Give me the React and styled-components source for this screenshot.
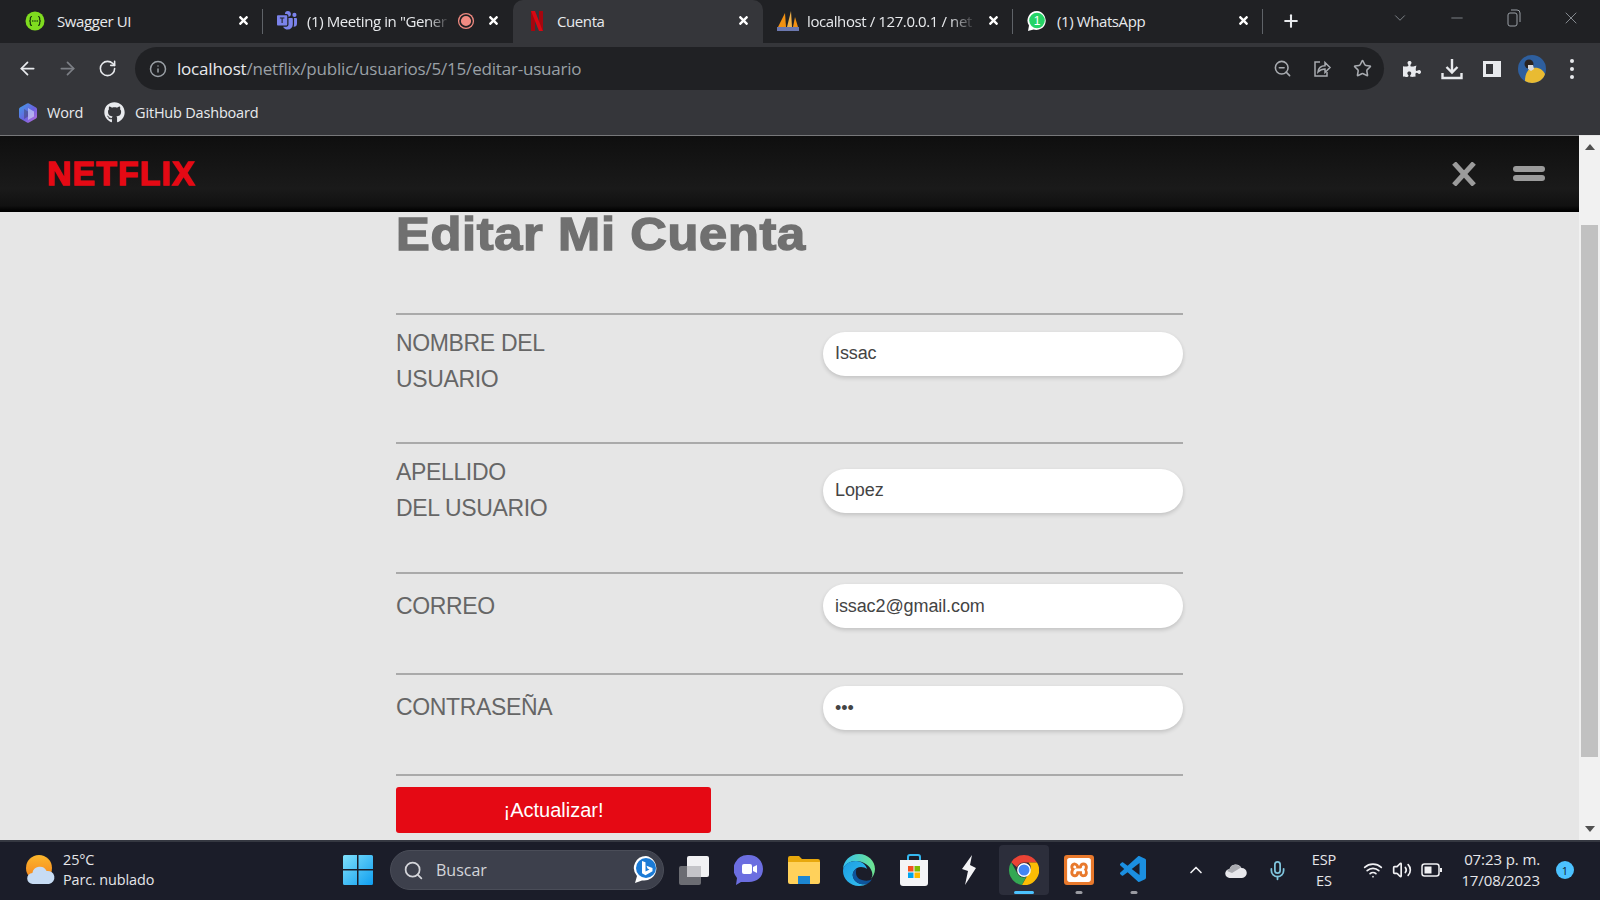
import React from "react";
import styled, { createGlobalStyle } from "styled-components";
import {
  ArrowLeft, ArrowRight, RotateCw, Info, ZoomOut, Star, Search, X, Plus,
  ChevronDown, Minus, ChevronUp, Mic, Wifi, Volume2,
} from "lucide-react";
import { FaGithub, FaPuzzlePiece, FaTimes } from "react-icons/fa";
import { SiXampp } from "react-icons/si";
import { BsMicrosoftTeams } from "react-icons/bs";
import { VscVscode } from "react-icons/vsc";

const Global = createGlobalStyle`
  html, body { margin: 0; padding: 0; height: 100%; overflow: hidden; background: #e6e6e6; }
  * { box-sizing: border-box; }
`;

const UI = `"Open Sans", "Noto Sans", sans-serif`;
const WEB = `"Liberation Sans", Arial, sans-serif`;

const Screen = styled.div`
  width: 1600px; height: 900px; display: flex; flex-direction: column; overflow: hidden;
`;

/* ---- browser chrome ---- */
const TabStrip = styled.div`
  height: 43px; background: #202124; display: flex; align-items: stretch; padding-left: 13px; flex: none;
`;
const Tab = styled.div`
  width: 250px; display: flex; align-items: center; padding: 0 10px 2px 14px; position: relative;
  color: #e8eaed; font: 15px ${UI}; letter-spacing: -0.4px;
  background: ${p => (p.$active ? "#35363a" : "transparent")};
  border-radius: ${p => (p.$active ? "10px 10px 0 0" : "0")};
  &::after {
    content: ""; position: absolute; right: 0; top: 9px; bottom: 9px; width: 1px;
    background: ${p => (p.$sep ? "#5f6368" : "transparent")};
  }
`;
const Favicon = styled.span`
  width: 30px; height: 22px; display: flex; align-items: center; justify-content: flex-start; flex: none;
`;
const TabTitle = styled.span`
  white-space: nowrap; margin-right: auto;
  ${p => p.$fade && `
    -webkit-mask-image: linear-gradient(90deg, #000 86%, rgba(0,0,0,.15) 100%);
    mask-image: linear-gradient(90deg, #000 86%, rgba(0,0,0,.15) 100%);
  `}
`;
const RecDot = styled.span`
  width: 16px; height: 16px; border-radius: 50%; background: #f28b82; border: 2px solid #202124;
  box-shadow: 0 0 0 1.5px #f28b82; margin-right: 9px; flex: none; transform: scale(.85);
`;
const TabClose = styled.span`
  width: 20px; display: flex; justify-content: center; color: #fff; flex: none;
`;
const NewTab = styled.span`
  width: 56px; display: flex; align-items: center; justify-content: center; color: #e8eaed; padding-bottom: 2px;
`;
const WindowButtons = styled.div`
  margin-left: auto; display: flex; align-items: flex-start; color: #9aa0a6; padding-right: 1px;
`;
const WinBtn = styled.span`
  width: 57px; height: 36px; display: flex; align-items: center; justify-content: center;
`;

const Toolbar = styled.div`
  height: 47px; background: #35363a; display: flex; align-items: flex-end; flex: none; padding-left: 7px;
`;
const NavBtn = styled.span`
  width: 40px; height: 43px; display: flex; align-items: center; justify-content: center;
  color: ${p => (p.$dim ? "#7c7f85" : "#e8eaed")};
`;
const Omnibox = styled.div`
  width: 1249px; height: 43px; margin-left: 8px; background: #202124; border-radius: 22px;
  display: flex; align-items: center; padding: 0 2px 0 14px; color: #9aa0a6;
`;
const Url = styled.div`
  flex: 1; margin-left: 10px; font: 17px ${UI}; letter-spacing: -0.2px; color: #9aa0a6; white-space: nowrap;
  b { font-weight: 400; color: #e8eaed; }
`;
const OmniIcon = styled.span`
  width: 40px; display: flex; justify-content: center; color: #a8abb0;
`;
const ToolIcon = styled.span`
  width: 40px; height: 43px; display: flex; align-items: center; justify-content: center; color: #e8eaed;
`;
const ToolGroup = styled.div`
  display: flex; margin-left: 8px;
`;
const Dots = styled.span`
  display: flex; flex-direction: column; gap: 4px;
  i { display: block; width: 4px; height: 4px; border-radius: 50%; background: #e8eaed; }
`;

const Bookmarks = styled.div`
  height: 45px; background: #35363a; display: flex; align-items: center; padding-left: 18px; flex: none;
  color: #e8eaed; font: 14.5px ${UI}; letter-spacing: -0.2px;
`;
const Bookmark = styled.div`
  display: flex; align-items: center; gap: ${p => p.$gap}px; margin-right: 21px;
`;

/* ---- page ---- */
const Viewport = styled.div`
  flex: 1; min-height: 0; display: flex; background: #e6e6e6;
`;
const PageColumn = styled.div`
  flex: 1; min-width: 0; display: flex; flex-direction: column; overflow: hidden;
`;
const Header = styled.header`
  height: 77px; flex: none; border-top: 1px solid #77787a; border-bottom: 1px solid #000;
  background: linear-gradient(180deg, #0f0f0f 0%, #1a1a1a 70%, #111 93%, #000 100%);
  display: flex; align-items: center; padding: 0 34px 0 47px;
`;
const Logo = styled.div`
  color: #e50914; font: 900 33.5px/1 ${WEB}; letter-spacing: 1.3px; -webkit-text-stroke: 1.4px #e50914;
  margin-top: 1px;
`;
const HeaderActions = styled.div`
  margin-left: auto; display: flex; align-items: center; gap: 37px; color: #9b9b9b;
`;
const Burger = styled.span`
  width: 32px; display: flex; flex-direction: column; gap: 3px;
  i { display: block; height: 6px; border-radius: 3px; background: #9b9b9b; }
`;

const Main = styled.main`
  flex: 1; min-height: 0; width: 787px; margin-left: 396px;
`;
const Title = styled.h1`
  margin: 0; height: 101px; color: #707070; font: 700 46px/44px ${WEB}; white-space: nowrap;
  letter-spacing: 0.6px; -webkit-text-stroke: 1.4px #707070; transform: scaleX(1.1); transform-origin: left top;
`;
const Row = styled.div`
  height: ${p => p.$h}px; border-top: 2px solid #aaaaaa; display: grid; grid-template-columns: 1fr 360px;
`;
const Label = styled.label`
  color: #666; font: 23px/35.6px ${WEB}; letter-spacing: -0.35px; padding-top: ${p => p.$top}px;
  max-width: 190px; display: block;
`;
const Field = styled.div`
  padding-top: ${p => p.$top}px;
`;
const Input = styled.input`
  width: 100%; height: 44px; border: 0; outline: 0; border-radius: 22px; background: #fff;
  padding: 0 12px ${p => p.$lift}px; color: #444; font: 18px ${WEB}; letter-spacing: -0.1px;
  box-shadow: 0 2px 4px rgba(0, 0, 0, .16);
`;
const LastRule = styled.div`
  border-top: 2px solid #aaaaaa; padding-top: 11px;
`;
const Submit = styled.button`
  width: 315px; height: 46px; border: 0; border-radius: 3px; background: #e50914; color: #fff;
  font: 20px ${WEB}; display: block;
`;

const Scrollbar = styled.div`
  width: 21px; flex: none; background: #f1f1f1; display: flex; flex-direction: column; margin-top: 1px; padding: 0 2px;
`;
const ScrollArrow = styled.div`
  height: 22px; display: flex; align-items: center; justify-content: center; flex: none;
  &::before {
    content: ""; width: 0; height: 0; border-left: 5px solid transparent; border-right: 5px solid transparent;
    ${p => (p.$down ? "border-top: 6px solid #505050;" : "border-bottom: 6px solid #505050;")}
  }
`;
const ScrollTrack = styled.div`
  flex: 1; padding: ${p => p.$top}px 0 ${p => p.$bottom}px; display: flex;
`;
const ScrollThumb = styled.div`
  flex: 1; background: #c1c1c1;
`;

/* ---- taskbar ---- */
const Taskbar = styled.footer`
  height: 60px; flex: none; background: #1b1d29; border-top: 2px solid #353841; display: flex; align-items: center;
  color: #e6e6ea; font: 14.4px ${UI}; padding: 0 0 2px 26px;
`;
const Weather = styled.div`
  width: 317px; display: flex; align-items: center; gap: 7px;
`;
const TwoLines = styled.div`
  display: flex; flex-direction: column; line-height: 20px; text-align: left;
  letter-spacing: -0.1px; white-space: nowrap;
`;
const SearchPill = styled.div`
  width: 274px; height: 40px; margin-left: 17px; border-radius: 20px; background: #3d404c; border: 1px solid #4a4d58;
  display: flex; align-items: center; padding: 0 4px 0 12px; gap: 12px; color: #d4d5da; font-size: 16px;
`;
const PillText = styled.span`
  flex: 1;
`;
const Apps = styled.div`
  display: flex; align-items: center; margin-left: 3px;
`;
const AppSlot = styled.div`
  width: 54.9px; height: 50px; display: flex; align-items: center; justify-content: center; position: relative; flex: none;
  &::before {
    content: ""; position: absolute; inset: 0 2.5px; border-radius: 4px;
    background: ${p => (p.$active ? "#2c2e3b" : "transparent")};
  }
  & > * { position: relative; }
  &::after {
    content: ""; position: absolute; bottom: 1px; left: 50%; transform: translateX(-50%); height: 3px; border-radius: 2px;
    width: ${p => (p.$active ? "20px" : p.$running ? "7px" : "0")};
    background: ${p => (p.$active ? "#4cc2ff" : "#9a9ba2")};
  }
`;
const Tray = styled.div`
  display: flex; align-items: center; margin-left: 17px; font-size: 14.5px;
`;
const TrayIcon = styled.span`
  width: ${p => p.$w}px; display: flex; justify-content: center; color: ${p => p.$color || "#f0f0f3"};
`;
const Lang = styled(TwoLines)`
  width: 48px; margin: 0 10px 0 4px; text-align: center; line-height: 21px;
`;
const Clock = styled(TwoLines)`
  width: 90px; margin-left: 2px; line-height: 21px; font-size: 15px; align-items: flex-end;
`;
const Badge = styled.span`
  width: 18px; height: 18px; margin-left: 16px; border-radius: 50%; background: #4cc2ff; color: #10202c; font-size: 11px;
  display: flex; align-items: center; justify-content: center;
`;

/* ---- drawings ---- */
const SwaggerIcon = () => (
  <svg width="20" height="20" viewBox="0 0 20 20" style={{ marginLeft: -2 }}>
    <circle cx="10" cy="10" r="9.500" fill="#7fdc1f" />
    <path fill="none" stroke="#17330c" strokeWidth="1.200" d="M7 5.500c-1.500 0-1.700.8-1.700 2v1.200c0 .8-.4 1.300-1.100 1.300.7 0 1.100.5 1.100 1.300v1.200c0 1.200.2 2 1.700 2M13 5.500c1.500 0 1.700.8 1.700 2v1.200c0 .8.400 1.300 1.100 1.300-.7 0-1.100.5-1.100 1.300v1.200c0 1.200-.2 2-1.700 2" />
    <circle cx="7.800" cy="10" r=".8" fill="#17330c" /><circle cx="10" cy="10" r=".8" fill="#17330c" /><circle cx="12.200" cy="10" r=".8" fill="#17330c" />
  </svg>
);
const NetflixN = () => (
  <svg width="20" height="20" viewBox="0 0 20 20"><path fill="#a5060e" d="M4 0h4v20l-4 .5z" /><path fill="#a5060e" d="M12 0h4v20.500L12 20z" /><path fill="#d90812" d="M4 0h4l8 20.500-4-.5z" /></svg>
);
const Pma = () => (
  <svg width="22" height="22" viewBox="0 0 22 22"><path fill="#f29111" d="M1 17 8 3l1 14z" /><path fill="#f2b34a" d="M10 17 14 1l1 16z" /><path fill="#f29111" d="M16 17l2-10 3 10z" /><path fill="#6c78af" d="M0 17h22v4H0z" /></svg>
);
const Whats = () => (
  <svg width="20" height="22" viewBox="0 0 20 22">
    <path fill="#fff" d="M10 1a9.500 9.500 0 0 0-8 14.600L1 21l5.600-1.400A9.500 9.500 0 1 0 10 1z" />
    <circle cx="10" cy="10.500" r="7.800" fill="#25d366" />
    <text x="10" y="15" fontSize="12" textAnchor="middle" fill="#fff" fontFamily="Liberation Sans">1</text>
  </svg>
);
const Copilot = () => (
  <svg width="20" height="22" viewBox="0 0 20 22">
    <defs>
      <linearGradient id="cp" x1="0" y1="0" x2="1" y2="1"><stop offset="0" stopColor="#3fa0e8" /><stop offset=".55" stopColor="#6a62e0" /><stop offset="1" stopColor="#c56fd8" /></linearGradient>
    </defs>
    <path fill="url(#cp)" d="M9 1.500a2 2 0 0 1 2 0l7 4a2 2 0 0 1 1 1.700v7.600a2 2 0 0 1-1 1.700l-7 4a2 2 0 0 1-2 0l-7-4a2 2 0 0 1-1-1.700V7.200a2 2 0 0 1 1-1.700z" />
    <path fill="#35363a" d="M6 7l4 2.500v5L6 17z" opacity=".35" />
    <path fill="#dfe9fb" d="M10 6l6 3.500v5L10 18z" opacity=".55" />
  </svg>
);
const Share = () => (
  <svg width="20" height="20" viewBox="0 0 20 20" fill="none" stroke="currentColor" strokeWidth="1.500"><path d="M8 3H3v14h12v-4" /><path d="M6 13c.5-4 3-6.200 7-6.200V3.500l5 5-5 5V10c-3 0-5 1-7 3z" /></svg>
);
const DownloadIcon = () => (
  <svg width="22" height="22" viewBox="0 0 22 22" fill="none" stroke="currentColor" strokeWidth="2.400"><path d="M11 1v13M5.500 9l5.500 5.500L16.500 9" /><path d="M1.500 15v5h19v-5" /></svg>
);
const SidePanel = () => (
  <svg width="18" height="18" viewBox="0 0 18 18"><path fill="currentColor" fillRule="evenodd" d="M0 1h18v16H0zM3 4v10h7V4z" /></svg>
);
const Avatar = () => (
  <svg width="28" height="28" viewBox="0 0 28 28">
    <circle cx="14" cy="14" r="14" fill="#2e5f9e" />
    <path fill="#e9bb32" d="M7 26c0-7 3-13 8-13 6-1 10 2 12 6-1 5-7 9-13 9-2 0-5-.7-7-2z" />
    <circle cx="11" cy="9" r="4.500" fill="#2a2320" />
    <path fill="#dcdcdc" d="M10 10h5l1 4-3 2-3-2z" />
  </svg>
);
const HeaderX = () => (
  <svg width="24" height="24" viewBox="0 0 24 24" stroke="currentColor" strokeWidth="5" strokeLinecap="butt"><path d="M2 1l20 22M22 1L2 23" /></svg>
);
const WeatherIcon = () => (
  <svg width="30" height="30" viewBox="0 0 30 30">
    <defs><linearGradient id="sun" x1="0" y1="0" x2="0" y2="1"><stop offset="0" stopColor="#fcb72c" /><stop offset="1" stopColor="#f4801d" /></linearGradient></defs>
    <circle cx="13" cy="13" r="13" fill="url(#sun)" />
    <path fill="#c7dcf4" d="M7 29a5.500 5.500 0 0 1-.6-11A7.500 7.500 0 0 1 20.600 16 6.500 6.500 0 0 1 23 29z" />
  </svg>
);
const WinLogo = () => (
  <svg width="30" height="30" viewBox="0 0 30 30">
    <defs><linearGradient id="win" x1="0" y1="0" x2="1" y2="1"><stop offset="0" stopColor="#7fe0fb" /><stop offset="1" stopColor="#0f9ef0" /></linearGradient></defs>
    <path fill="url(#win)" d="M0 1.500A1.500 1.500 0 0 1 1.500 0H14v14H0zM15.500 0H28.500A1.500 1.500 0 0 1 30 1.500V14H15.500zM0 15.500H14V30H1.500A1.500 1.500 0 0 1 0 28.500zM15.500 15.500H30V28.500A1.500 1.500 0 0 1 28.500 30H15.500z" />
  </svg>
);
const Bing = () => (
  <svg width="26" height="30" viewBox="0 0 26 30">
    <path fill="#fff" d="M13 1a12 12 0 0 0-9 20l-2 7 7-2.600A12 12 0 1 0 13 1z" />
    <circle cx="13" cy="13" r="10" fill="#1b7bd6" />
    <path fill="#fff" d="M9 6l3.500 1.200v9.400l4-2.200-2-1-1-2.700 6 2.200v3.400l-7 4L9 18.300z" />
  </svg>
);
const TaskView = () => (
  <svg width="30" height="30" viewBox="0 0 30 30">
    <rect x="0" y="11" width="22" height="19" rx="2" fill="#6b6c72" />
    <rect x="8" y="1" width="22" height="21" rx="2" fill="#f1f1f3" />
    <rect x="8" y="11" width="14" height="11" fill="#c4c4c8" />
  </svg>
);
const ChatIcon = () => (
  <svg width="30" height="32" viewBox="0 0 30 32">
    <path fill="#6c6ee0" d="M15 1c8 0 14 6 14 14s-6 13-14 13H7l-5 3 1-7A14 14 0 0 1 15 1z" />
    <rect x="8" y="10" width="10" height="10" rx="2" fill="#fff" />
    <path fill="#fff" d="M19 13l4-2v8l-4-2z" />
  </svg>
);
const Folder = () => (
  <svg width="32" height="28" viewBox="0 0 32 28">
    <path fill="#e8a80c" d="M0 2a2 2 0 0 1 2-2h9l3 3h16a2 2 0 0 1 2 2v4H0z" />
    <path fill="#ffd15b" d="M0 6h32v20a2 2 0 0 1-2 2H2a2 2 0 0 1-2-2z" />
    <path fill="#1c86d1" d="M10 20h12v8H10z" />
  </svg>
);
const Edge = () => (
  <svg width="32" height="32" viewBox="0 0 32 32">
    <defs>
      <linearGradient id="eg1" x1="0" y1="1" x2="1" y2="0"><stop offset="0" stopColor="#0c59a4" /><stop offset="1" stopColor="#114a8b" /></linearGradient>
      <linearGradient id="eg2" x1="0" y1="0" x2="1" y2="1"><stop offset="0" stopColor="#1b9de2" /><stop offset="1" stopColor="#35c1f1" /></linearGradient>
      <linearGradient id="eg3" x1="0" y1="0" x2="1" y2="0"><stop offset="0" stopColor="#35c1f1" /><stop offset="1" stopColor="#6fe58f" /></linearGradient>
    </defs>
    <path fill="url(#eg3)" d="M16 0C7 0 .5 7 0 15c2-5 7-8 13-8 7 0 14 4 16 11 1 3 0 6-2 8 3-3 5-7 5-11C32 7 25 0 16 0z" />
    <path fill="url(#eg2)" d="M13 7C6 7 0 11 0 17c0 8 7 15 16 15 3 0 6-1 8-2-4 1-12 0-14-7-1-4 1-7 4-9 3-2 8-1 10 1-1-4-5-8-11-8z" />
    <path fill="url(#eg1)" d="M14 14c-3 2-5 5-4 9 2 7 10 8 14 7 2-1 4-3 5-5-2 2-7 2-10 1-4-1-6-4-6-7 0-2 0-4 1-5z" />
  </svg>
);
const Store = () => (
  <svg width="30" height="32" viewBox="0 0 30 32">
    <path fill="none" stroke="#35b8f0" strokeWidth="2" d="M9 7V3a2 2 0 0 1 2-2h8a2 2 0 0 1 2 2v4" />
    <path fill="#f4f4f6" d="M1 6h28v23a3 3 0 0 1-3 3H4a3 3 0 0 1-3-3z" />
    <rect x="9" y="12" width="5.500" height="5.500" fill="#f25022" />
    <rect x="15.500" y="12" width="5.500" height="5.500" fill="#7fba00" />
    <rect x="9" y="18.500" width="5.500" height="5.500" fill="#00a4ef" />
    <rect x="15.500" y="18.500" width="5.500" height="5.500" fill="#ffb900" />
  </svg>
);
const Bolt = () => (
  <svg width="16" height="30" viewBox="0 0 16 30">
    <path fill="#f4f4f6" d="M11 0 1 14l6 2-3 14 11-17-6-3z" />
  </svg>
);
const ChromeLogo = () => (
  <svg width="30" height="30" viewBox="0 0 30 30">
    <path fill="#ea4335" d="M15 0a15 15 0 0 1 13 7.500H15a7.500 7.500 0 0 0-7 4.800L2.200 7.300A15 15 0 0 1 15 0z" />
    <path fill="#34a853" d="M2.200 7.300 8.700 18.900a7.500 7.500 0 0 0 8.400 3.200L13 30A15 15 0 0 1 2.200 7.300z" />
    <path fill="#fbbc04" d="M28 7.500A15 15 0 0 1 13 30l6.500-11.400a7.500 7.500 0 0 0 0-11.100z" />
    <circle cx="15" cy="15" r="6.900" fill="#fff" />
    <circle cx="15" cy="15" r="5.500" fill="#4285f4" />
  </svg>
);
const XamppBox = styled.span`
  width: 30px; height: 30px; background: #e8792c; border-radius: 3px; color: #fff;
  display: flex; align-items: center; justify-content: center;
`;
const CloudIcon = () => (
  <svg width="22" height="16" viewBox="0 0 22 16"><path fill="#e8e8ec" d="M5 16a4.500 4.500 0 0 1-.5-9A6.500 6.500 0 0 1 16.500 6 5 5 0 0 1 17 16z" /><path fill="#a9aab0" d="M4.500 7A6.500 6.500 0 0 1 16 5.500L7 11 2 9z" /></svg>
);
const Battery = () => (
  <svg width="22" height="16" viewBox="0 0 22 16" fill="none"><rect x="1" y="2" width="17" height="12" rx="2.500" stroke="#f0f0f3" strokeWidth="1.500" /><rect x="3.500" y="4.500" width="7" height="7" fill="#f0f0f3" /><rect x="19" y="6" width="2" height="4" fill="#f0f0f3" /></svg>
);
const RestoreIcon = () => (
  <svg width="14" height="18" viewBox="0 0 14 18" fill="none" stroke="currentColor" strokeWidth="1"><rect x="1" y="4" width="9" height="13" rx="2" /><path d="M4 1h6a3 3 0 0 1 3 3v9" /></svg>
);

const tabs = [
  { icon: <SwaggerIcon />, title: "Swagger UI", sep: true },
  { icon: <BsMicrosoftTeams size={20} color="#7b83eb" />, title: '(1) Meeting in "Gener', fade: true, rec: true },
  { icon: <NetflixN />, title: "Cuenta", active: true },
  { icon: <Pma />, title: "localhost / 127.0.0.1 / net", fade: true, sep: true },
  { icon: <Whats />, title: "(1) WhatsApp", sep: true },
];

const rows = [
  { id: "nombre", label: "NOMBRE DEL USUARIO", value: "Issac", h: 129, lt: 11, ft: 17, lift: 2 },
  { id: "apellido", label: <>APELLIDO<br />DEL USUARIO</>, value: "Lopez", h: 130, lt: 11, ft: 25, lift: 2 },
  { id: "correo", label: "CORREO", value: "issac2@gmail.com", h: 101, lt: 15, ft: 10, lift: 0 },
  { id: "clave", label: "CONTRASEÑA", value: "abc", h: 101, lt: 15, ft: 11, lift: 0, type: "password" },
];

export default function App() {
  return (
    <Screen>
      <Global />
      <TabStrip>
        {tabs.map(t => (
          <Tab key={t.title} $active={t.active} $sep={t.sep}>
            <Favicon>{t.icon}</Favicon>
            <TabTitle $fade={t.fade}>{t.title}</TabTitle>
            {t.rec && <RecDot />}
            <TabClose><FaTimes size={13} /></TabClose>
          </Tab>
        ))}
        <NewTab><Plus size={20} strokeWidth={2.5} /></NewTab>
        <WindowButtons>
          <WinBtn><ChevronDown size={18} strokeWidth={1} /></WinBtn>
          <WinBtn><Minus size={18} strokeWidth={1} /></WinBtn>
          <WinBtn><RestoreIcon /></WinBtn>
          <WinBtn><X size={20} strokeWidth={1} /></WinBtn>
        </WindowButtons>
      </TabStrip>

      <Toolbar>
        <NavBtn><ArrowLeft size={21} /></NavBtn>
        <NavBtn $dim><ArrowRight size={21} /></NavBtn>
        <NavBtn><RotateCw size={19} /></NavBtn>
        <Omnibox>
          <Info size={18} />
          <Url><b>localhost</b>/netflix/public/usuarios/5/15/editar-usuario</Url>
          <OmniIcon><ZoomOut size={19} /></OmniIcon>
          <OmniIcon><Share /></OmniIcon>
          <OmniIcon><Star size={19} /></OmniIcon>
        </Omnibox>
        <ToolGroup>
          <ToolIcon><FaPuzzlePiece size={18} /></ToolIcon>
          <ToolIcon><DownloadIcon /></ToolIcon>
          <ToolIcon><SidePanel /></ToolIcon>
          <ToolIcon><Avatar /></ToolIcon>
          <ToolIcon><Dots><i /><i /><i /></Dots></ToolIcon>
        </ToolGroup>
      </Toolbar>

      <Bookmarks>
        <Bookmark $gap={9}><Copilot />Word</Bookmark>
        <Bookmark $gap={10}><FaGithub size={21} />GitHub Dashboard</Bookmark>
      </Bookmarks>

      <Viewport>
        <PageColumn>
          <Header>
            <Logo>NETFLIX</Logo>
            <HeaderActions>
              <HeaderX />
              <Burger><i /><i /></Burger>
            </HeaderActions>
          </Header>
          <Main>
            <Title>Editar Mi Cuenta</Title>
            {rows.map(r => (
              <Row key={r.id} $h={r.h}>
                <Label htmlFor={r.id} $top={r.lt}>{r.label}</Label>
                <Field $top={r.ft}>
                  <Input id={r.id} $lift={r.lift} type={r.type || "text"} defaultValue={r.value} />
                </Field>
              </Row>
            ))}
            <LastRule><Submit type="button">¡Actualizar!</Submit></LastRule>
          </Main>
        </PageColumn>
        <Scrollbar>
          <ScrollArrow />
          <ScrollTrack $top={67} $bottom={61}><ScrollThumb /></ScrollTrack>
          <ScrollArrow $down />
        </Scrollbar>
      </Viewport>

      <Taskbar>
        <Weather>
          <WeatherIcon />
          <TwoLines><span>25°C</span><span>Parc. nublado</span></TwoLines>
        </Weather>
        <WinLogo />
        <SearchPill>
          <Search size={21} />
          <PillText>Buscar</PillText>
          <Bing />
        </SearchPill>
        <Apps>
          <AppSlot><TaskView /></AppSlot>
          <AppSlot><ChatIcon /></AppSlot>
          <AppSlot><Folder /></AppSlot>
          <AppSlot><Edge /></AppSlot>
          <AppSlot><Store /></AppSlot>
          <AppSlot><Bolt /></AppSlot>
          <AppSlot $active><ChromeLogo /></AppSlot>
          <AppSlot $running><XamppBox><SiXampp size={24} /></XamppBox></AppSlot>
          <AppSlot $running><VscVscode size={32} color="#1b8fe0" /></AppSlot>
        </Apps>
        <Tray>
          <TrayIcon $w={36}><ChevronUp size={20} /></TrayIcon>
          <TrayIcon $w={44}><CloudIcon /></TrayIcon>
          <TrayIcon $w={38} $color="#7fc4dc"><Mic size={21} /></TrayIcon>
          <Lang><span>ESP</span><span>ES</span></Lang>
          <TrayIcon $w={30}><Wifi size={20} /></TrayIcon>
          <TrayIcon $w={28}><Volume2 size={20} /></TrayIcon>
          <TrayIcon $w={32}><Battery /></TrayIcon>
          <Clock><span>07:23 p. m.</span><span>17/08/2023</span></Clock>
          <Badge>1</Badge>
        </Tray>
      </Taskbar>
    </Screen>
  );
}
